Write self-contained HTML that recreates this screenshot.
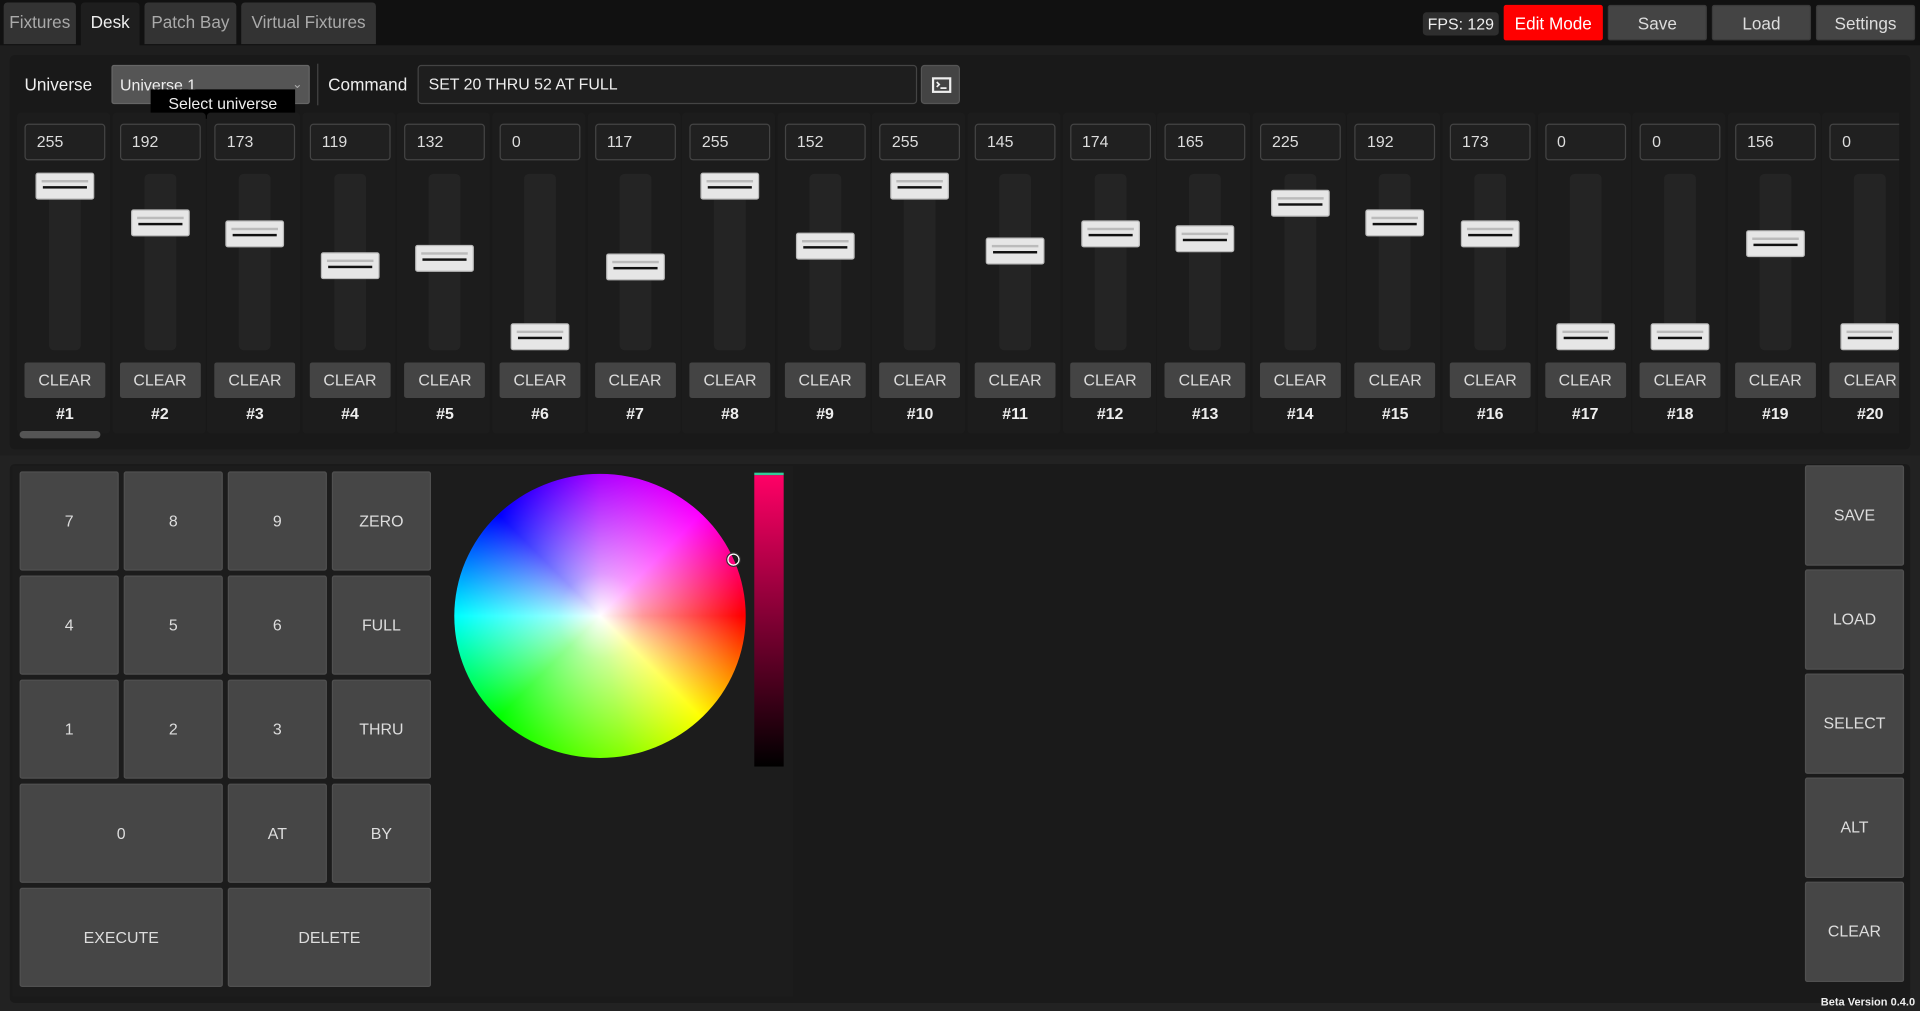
<!DOCTYPE html>
<html><head><meta charset="utf-8"><style>
*{box-sizing:border-box;margin:0;padding:0}
html,body{width:1920px;height:1011px;overflow:hidden;background:#1a1a1a}
#w{position:absolute;left:0;top:0;width:1568px;height:826px;transform:scale(1.22449);transform-origin:0 0;font-family:"Liberation Sans",sans-serif;color:#ddd;background:#1e1e1e}
.a{position:absolute}
.tab{position:absolute;top:2px;height:34px;background:#333;color:#aaa;font-size:14px;line-height:33px;text-align:center;border-radius:3px 3px 0 0}
.tb{position:absolute;top:4px;height:29px;width:81px;background:#444;color:#ddd;font-size:14px;line-height:29px;text-align:center;border-radius:2px;border:1px solid #3a3a3a}
.c{position:absolute;top:0;width:66px;height:360px}
.c .bg{position:absolute;left:-6px;top:92px;width:76px;height:262px;background:#1c1c1c;border-radius:3px}
.c .in{position:absolute;left:0;top:101px;width:66px;height:30px;border:1px solid #444;border-radius:3px;background:#202020;font-size:13px;line-height:28px;padding-left:9px;color:#ddd}
.c .tr{position:absolute;left:20px;top:142px;width:26px;height:144px;background:#242424;border-radius:4px}
.c .h{position:absolute;left:9px;width:48px;height:22px;background:#e6e6e6;border:1px solid #bbb;border-radius:2px}
.c .h:before{content:"";position:absolute;left:4px;right:4px;top:5px;height:2px;background:#bbb}
.c .h:after{content:"";position:absolute;left:5px;right:5px;top:10px;height:2px;background:#111}
.c .cl{position:absolute;left:0;top:296px;width:66px;height:29px;background:#444;border-radius:2px;font-size:13px;line-height:29px;text-align:center;color:#ddd}
.c .n{position:absolute;left:0;top:330px;width:66px;text-align:center;font-size:13px;font-weight:bold;color:#eee}
.k{position:absolute;width:81px;height:81px;background:#464646;border:1px solid #505050;border-radius:2px;font-size:13px;color:#ddd;text-align:center;line-height:79px}
</style></head><body><div id="w">
<div class="a" style="left:0;top:0;width:1568px;height:37px;background:#111"></div>
<div class="tab" style="left:3px;width:59px">Fixtures</div>
<div class="tab" style="left:66px;width:48px;background:#1e1e1e;color:#eee;height:36px">Desk</div>
<div class="tab" style="left:118px;width:75px">Patch Bay</div>
<div class="tab" style="left:197px;width:110px">Virtual Fixtures</div>
<div class="a" style="left:1162px;top:10px;width:62px;height:19px;background:#2e2e2e;border-radius:3px;font-size:13px;line-height:19px;text-align:center;color:#eee">FPS: 129</div>
<div class="tb" style="left:1228px;background:#f00;border-color:#f00;color:#fff">Edit Mode</div>
<div class="tb" style="left:1313px">Save</div>
<div class="tb" style="left:1398px">Load</div>
<div class="tb" style="left:1483px">Settings</div>
<div class="a" style="left:8px;top:45px;width:1552px;height:322px;background:#191919;border-radius:4px"></div>
<div class="a" style="left:20px;top:61px;font-size:14px;color:#eee">Universe</div>
<div class="a" style="left:91px;top:53px;width:162px;height:32px;background:#555;border:1px solid #666;border-radius:2px;font-size:13px;line-height:31px;padding-left:6px;color:#eee">Universe 1<span style="position:absolute;right:5px;color:#aaa;font-size:10px">&#8964;</span></div>
<div class="a" style="left:123px;top:73px;width:118px;height:24px;background:#000;color:#eee;font-size:13px;line-height:24px;text-align:center">Select universe</div>
<div class="a" style="left:259px;top:52px;width:1px;height:34px;background:#444"></div>
<div class="a" style="left:268px;top:61px;font-size:14px;color:#eee">Command</div>
<div class="a" style="left:341px;top:53px;width:408px;height:32px;border:1px solid #444;border-radius:3px;background:#1e1e1e;font-size:13px;line-height:30px;padding-left:8px;color:#eee">SET 20 THRU 52 AT FULL</div>
<div class="a" style="left:752px;top:53px;width:32px;height:32px;background:#444;border:1px solid #555;border-radius:3px"><svg width="32" height="32" viewBox="0 0 32 32"><rect x="9" y="10" width="14" height="11" fill="none" stroke="#eee" stroke-width="1.8"/><path d="M12 13l2 2-2 2M15 18h5" stroke="#eee" stroke-width="1.4" fill="none"/></svg></div>
<div class="a" style="left:12px;top:0;width:1539px;height:370px;overflow:hidden">
<div class="a" style="left:-12px;top:0;width:1600px;height:370px">
<div class="c" style="left:20px"><div class="bg"></div><div class="in">255</div><div class="tr"></div><div class="h" style="top:141px"></div><div class="cl">CLEAR</div><div class="n">#1</div></div>
<div class="c" style="left:97.6px"><div class="bg"></div><div class="in">192</div><div class="tr"></div><div class="h" style="top:171px"></div><div class="cl">CLEAR</div><div class="n">#2</div></div>
<div class="c" style="left:175.2px"><div class="bg"></div><div class="in">173</div><div class="tr"></div><div class="h" style="top:180px"></div><div class="cl">CLEAR</div><div class="n">#3</div></div>
<div class="c" style="left:252.8px"><div class="bg"></div><div class="in">119</div><div class="tr"></div><div class="h" style="top:206px"></div><div class="cl">CLEAR</div><div class="n">#4</div></div>
<div class="c" style="left:330.4px"><div class="bg"></div><div class="in">132</div><div class="tr"></div><div class="h" style="top:200px"></div><div class="cl">CLEAR</div><div class="n">#5</div></div>
<div class="c" style="left:408px"><div class="bg"></div><div class="in">0</div><div class="tr"></div><div class="h" style="top:264px"></div><div class="cl">CLEAR</div><div class="n">#6</div></div>
<div class="c" style="left:485.6px"><div class="bg"></div><div class="in">117</div><div class="tr"></div><div class="h" style="top:207px"></div><div class="cl">CLEAR</div><div class="n">#7</div></div>
<div class="c" style="left:563.2px"><div class="bg"></div><div class="in">255</div><div class="tr"></div><div class="h" style="top:141px"></div><div class="cl">CLEAR</div><div class="n">#8</div></div>
<div class="c" style="left:640.8px"><div class="bg"></div><div class="in">152</div><div class="tr"></div><div class="h" style="top:190px"></div><div class="cl">CLEAR</div><div class="n">#9</div></div>
<div class="c" style="left:718.4px"><div class="bg"></div><div class="in">255</div><div class="tr"></div><div class="h" style="top:141px"></div><div class="cl">CLEAR</div><div class="n">#10</div></div>
<div class="c" style="left:796px"><div class="bg"></div><div class="in">145</div><div class="tr"></div><div class="h" style="top:194px"></div><div class="cl">CLEAR</div><div class="n">#11</div></div>
<div class="c" style="left:873.6px"><div class="bg"></div><div class="in">174</div><div class="tr"></div><div class="h" style="top:180px"></div><div class="cl">CLEAR</div><div class="n">#12</div></div>
<div class="c" style="left:951.2px"><div class="bg"></div><div class="in">165</div><div class="tr"></div><div class="h" style="top:184px"></div><div class="cl">CLEAR</div><div class="n">#13</div></div>
<div class="c" style="left:1028.8px"><div class="bg"></div><div class="in">225</div><div class="tr"></div><div class="h" style="top:155px"></div><div class="cl">CLEAR</div><div class="n">#14</div></div>
<div class="c" style="left:1106.4px"><div class="bg"></div><div class="in">192</div><div class="tr"></div><div class="h" style="top:171px"></div><div class="cl">CLEAR</div><div class="n">#15</div></div>
<div class="c" style="left:1184px"><div class="bg"></div><div class="in">173</div><div class="tr"></div><div class="h" style="top:180px"></div><div class="cl">CLEAR</div><div class="n">#16</div></div>
<div class="c" style="left:1261.6px"><div class="bg"></div><div class="in">0</div><div class="tr"></div><div class="h" style="top:264px"></div><div class="cl">CLEAR</div><div class="n">#17</div></div>
<div class="c" style="left:1339.2px"><div class="bg"></div><div class="in">0</div><div class="tr"></div><div class="h" style="top:264px"></div><div class="cl">CLEAR</div><div class="n">#18</div></div>
<div class="c" style="left:1416.8px"><div class="bg"></div><div class="in">156</div><div class="tr"></div><div class="h" style="top:188px"></div><div class="cl">CLEAR</div><div class="n">#19</div></div>
<div class="c" style="left:1494.4px"><div class="bg"></div><div class="in">0</div><div class="tr"></div><div class="h" style="top:264px"></div><div class="cl">CLEAR</div><div class="n">#20</div></div>
</div></div>
<div class="a" style="left:16px;top:352px;width:66px;height:6px;background:#555;border-radius:3px"></div>
<div class="a" style="left:0;top:372px;width:1568px;height:454px;background:#222"></div>
<div class="a" style="left:8px;top:379px;width:1552px;height:440px;background:#1a1a1a;border-radius:4px"></div>
<div class="a" style="left:10px;top:380px;width:638px;height:434px;background:#1c1c1c"></div>
<div class="k" style="left:16px;top:385px">7</div><div class="k" style="left:101px;top:385px">8</div><div class="k" style="left:186px;top:385px">9</div><div class="k" style="left:271px;top:385px">ZERO</div>
<div class="k" style="left:16px;top:470px">4</div><div class="k" style="left:101px;top:470px">5</div><div class="k" style="left:186px;top:470px">6</div><div class="k" style="left:271px;top:470px">FULL</div>
<div class="k" style="left:16px;top:555px">1</div><div class="k" style="left:101px;top:555px">2</div><div class="k" style="left:186px;top:555px">3</div><div class="k" style="left:271px;top:555px">THRU</div>
<div class="k" style="left:16px;top:640px;width:166px">0</div><div class="k" style="left:186px;top:640px">AT</div><div class="k" style="left:271px;top:640px">BY</div>
<div class="k" style="left:16px;top:725px;width:166px">EXECUTE</div><div class="k" style="left:186px;top:725px;width:166px">DELETE</div>
<div class="a" style="left:371px;top:387px;width:238px;height:232px;border-radius:50%;background:conic-gradient(#a0f 0deg,#f0f 45deg,#f00 90deg,#ff0 135deg,#8f0 170deg,#0f0 225deg,#0ff 270deg,#00f 315deg,#a0f 360deg)"></div>
<div class="a" style="left:371px;top:387px;width:238px;height:232px;border-radius:50%;background:radial-gradient(circle closest-side,#fff 0%,rgba(255,255,255,.6) 30%,rgba(255,255,255,0) 100%)"></div>
<div class="a" style="left:594px;top:452px;width:10px;height:10px;border:1.5px solid #fff;border-radius:50%;box-shadow:0 0 0 1px #333"></div>
<div class="a" style="left:616px;top:386px;width:24px;height:240px;background:linear-gradient(#ff0066,#000);border-top:2px solid #3c9"></div>
<div class="k" style="left:1474px;top:380px;height:82px">SAVE</div>
<div class="k" style="left:1474px;top:465px;height:82px">LOAD</div>
<div class="k" style="left:1474px;top:550px;height:82px">SELECT</div>
<div class="k" style="left:1474px;top:635px;height:82px">ALT</div>
<div class="k" style="left:1474px;top:720px;height:82px">CLEAR</div>
<div class="a" style="right:4px;top:813px;font-size:9px;font-weight:bold;color:#eee">Beta Version 0.4.0</div>
</div></body></html>
